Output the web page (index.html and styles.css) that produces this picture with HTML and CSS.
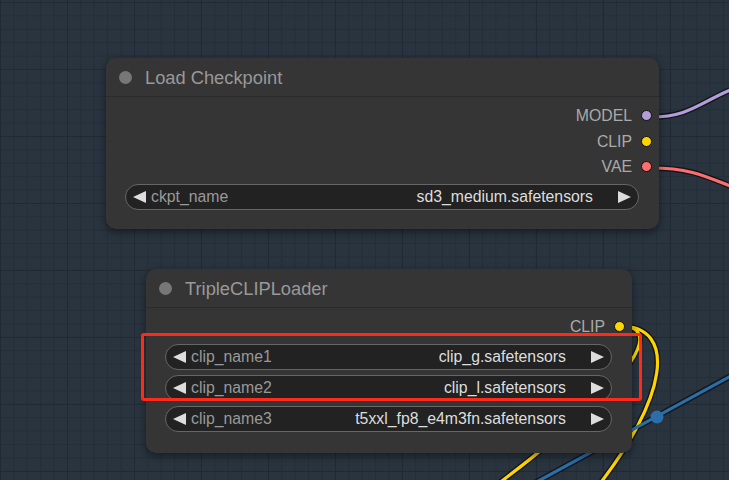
FILE: index.html
```html
<!DOCTYPE html>
<html lang="en">
<head>
    <meta charset="UTF-8">
    <title>ComfyUI - SD3 loaders</title>
    <link rel="stylesheet" href="styles.css">
</head>
<body>
    <div class="canvas">
        <svg class="links" width="729" height="480" viewBox="0 0 729 480">
            <g class="link-outline">
                <path d="M651 117 C690 117 700 102 735 88"/>
                <path d="M651 168 C690 168 705 176 735 188"/>
                <path d="M620 326 C678 326 668 398 595 490"/>
                <path d="M620 326 C660 326 650 370 490 490"/>
                <path d="M520 491 L740 371"/>
            </g>
            <path class="link" stroke="#b39ddb" d="M651 117 C690 117 700 102 735 88"/>
            <path class="link" stroke="#ff6e6e" d="M651 168 C690 168 705 176 735 188"/>
            <path class="link" stroke="#ffd500" d="M620 326 C678 326 668 398 595 490"/>
            <path class="link" stroke="#ffd500" d="M620 326 C660 326 650 370 490 490"/>
            <path class="link" stroke="#2b6ea8" d="M520 491 L740 371"/>
            <circle cx="657" cy="417" r="6.5" fill="#2b6ea8"/>
        </svg>

        <div class="node node-ckpt">
            <div class="node-title"><span class="title-dot"></span>Load Checkpoint</div>
            <div class="node-body">
                <div class="outputs">
                    <div class="slot">MODEL<span class="slot-dot model"></span></div>
                    <div class="slot">CLIP<span class="slot-dot clip"></span></div>
                    <div class="slot">VAE<span class="slot-dot vae"></span></div>
                </div>
                <div class="widgets">
                    <div class="combo">
                        <span class="arrow arrow-left"></span>
                        <span class="combo-label">ckpt_name</span>
                        <span class="combo-value">sd3_medium.safetensors</span>
                        <span class="arrow arrow-right"></span>
                    </div>
                </div>
            </div>
        </div>

        <div class="node node-clip">
            <div class="node-title"><span class="title-dot"></span>TripleCLIPLoader</div>
            <div class="node-body">
                <div class="outputs">
                    <div class="slot">CLIP<span class="slot-dot clip"></span></div>
                </div>
                <div class="widgets">
                    <div class="combo">
                        <span class="arrow arrow-left"></span>
                        <span class="combo-label">clip_name1</span>
                        <span class="combo-value">clip_g.safetensors</span>
                        <span class="arrow arrow-right"></span>
                    </div>
                    <div class="combo">
                        <span class="arrow arrow-left"></span>
                        <span class="combo-label">clip_name2</span>
                        <span class="combo-value">clip_l.safetensors</span>
                        <span class="arrow arrow-right"></span>
                    </div>
                    <div class="combo">
                        <span class="arrow arrow-left"></span>
                        <span class="combo-label">clip_name3</span>
                        <span class="combo-value">t5xxl_fp8_e4m3fn.safetensors</span>
                        <span class="arrow arrow-right"></span>
                    </div>
                </div>
            </div>
        </div>

        <div class="highlight"></div>
    </div>
</body>
</html>
```

FILE: styles.css
```css
body {
    margin: 0; padding: 0;
    font-family: 'Liberation Sans', Arial, sans-serif;
    overflow: hidden;
}
.canvas {
    position: relative;
    width: 729px; height: 480px; overflow: hidden;
    background-color: #29343f;
    background-image:
        linear-gradient(90deg, #212a34 1px, transparent 1px),
        linear-gradient(0deg, #212a34 1px, transparent 1px),
        linear-gradient(90deg, #242e38 1px, transparent 1px),
        linear-gradient(0deg, #242e38 1px, transparent 1px);
    background-size: 67px 67px, 67px 67px, 13.4px 13.4px, 13.4px 13.4px;
    background-position: 0 3px, 0 3px, 0 3px, 0 3px;
}
.links { position: absolute; left: 0; top: 0; z-index: 0; }
.link-outline path { fill: none; stroke: rgba(0, 0, 0, 0.55); stroke-width: 6; }
.link { fill: none; stroke-width: 3.2; }

.node {
    position: absolute; z-index: 1;
    box-sizing: border-box;
    background: #353535; border-radius: 10px;
    box-shadow: 0 3px 8px rgba(0, 0, 0, 0.45);
    display: flex; flex-direction: column;
}
.node-ckpt { left: 106px; top: 58px; width: 553px; height: 171px; }
.node-clip { left: 146px; top: 269px; width: 486px; height: 184px; }

.node-title {
    height: 39px; border-bottom: 1px solid #2b2b2b;
    box-sizing: border-box; padding-top: 1px;
    display: flex; align-items: center;
    padding-left: 12.5px;
    color: #999; font-size: 18.3px;
}
.title-dot {
    width: 13px; height: 13px; border-radius: 50%;
    background: #777; margin-right: 13.5px; flex-shrink: 0;
}
.node-body { padding-top: 6px; display: flex; flex-direction: column; gap: 4px; }
.outputs { display: flex; flex-direction: column; align-items: flex-end; padding-right: 7.5px; }
.slot {
    height: 25.5px; line-height: 25.5px;
    display: flex; align-items: center; gap: 8.5px;
    color: #aaa; font-size: 15.8px;
}
.slot-dot {
    width: 11px; height: 11px; border-radius: 50%;
    box-sizing: border-box; border: 1px solid #111;
}
.slot-dot.model { background: #b39ddb; }
.slot-dot.clip { background: #ffd500; }
.slot-dot.vae { background: #ff6e6e; }

.widgets { display: flex; flex-direction: column; gap: 5.3px; padding: 0 20px 0 18.5px; }
.combo {
    height: 26px; box-sizing: border-box;
    background: #222; border: 1px solid #666; border-radius: 13px;
    display: flex; align-items: center;
    font-size: 15.8px; white-space: nowrap;
}
.arrow { width: 0; height: 0; border-top: 6.5px solid transparent; border-bottom: 6.5px solid transparent; flex-shrink: 0; }
.arrow-left { border-right: 13px solid #ddd; margin-left: 7px; }
.arrow-right { border-left: 13px solid #ddd; margin-right: 7px; }
.combo-label { color: #999; margin-left: 5.5px; }
.combo-value { color: #ddd; flex: 1; text-align: right; padding-right: 25px; }

.highlight {
    position: absolute; z-index: 2;
    left: 141px; top: 333px; width: 501px; height: 68px;
    box-sizing: border-box;
    border: 3.5px solid #ff2a1a; border-radius: 3px;
}
```
